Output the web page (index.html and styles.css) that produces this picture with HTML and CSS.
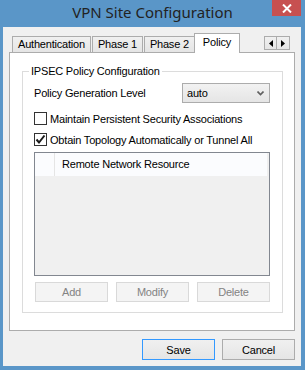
FILE: index.html
```html
<!DOCTYPE html>
<html>
<head>
    <title>VPN Site Configuration</title>
    <link rel="stylesheet" href="styles.css">
</head>
<body>
    <div class="window">
        <div class="titlebar">
            <span class="title">VPN Site Configuration</span>
            <span class="close">
                <svg width="10" height="9" viewBox="0 0 10 9">
                    <path d="M1 0.5 L9 8.5 M9 0.5 L1 8.5" stroke="#fff" stroke-width="2"/>
                </svg>
            </span>
        </div>

        <div class="client">
            <div class="tabs">
                <div class="tab">Authentication</div>
                <div class="tab">Phase 1</div>
                <div class="tab">Phase 2</div>
                <div class="tab active">Policy</div>
                <div class="tab-scroll">
                    <span class="scroll-btn">
                        <svg width="4" height="7" viewBox="0 0 4 7"><path d="M4 0 L0 3.5 L4 7 Z" fill="#000"/></svg>
                    </span>
                    <span class="scroll-btn">
                        <svg width="4" height="7" viewBox="0 0 4 7"><path d="M0 0 L4 3.5 L0 7 Z" fill="#000"/></svg>
                    </span>
                </div>
            </div>

            <div class="panel">
                <fieldset class="group">
                    <legend>IPSEC Policy Configuration</legend>

                    <div class="field-row">
                        <span>Policy Generation Level</span>
                        <div class="select">
                            <span>auto</span>
                            <svg width="7" height="5" viewBox="0 0 7 5">
                                <path d="M0.5 0.5 L3.5 3.5 L6.5 0.5" stroke="#606060" stroke-width="1.6" fill="none"/>
                            </svg>
                        </div>
                    </div>

                    <div class="check">
                        <span class="box"></span>
                        <span>Maintain Persistent Security Associations</span>
                    </div>
                    <div class="check">
                        <span class="box">
                            <svg width="11" height="11" viewBox="0 0 11 11">
                                <path d="M1.5 5.5 L4 8.5 L9.5 1.5" stroke="#1a1a1a" stroke-width="2" fill="none"/>
                            </svg>
                        </span>
                        <span>Obtain Topology Automatically or Tunnel All</span>
                    </div>

                    <div class="list">
                        <div class="list-header">
                            <span class="col-first"></span>
                            <span class="col-name">Remote Network Resource</span>
                        </div>
                    </div>

                    <div class="list-buttons">
                        <button class="btn" disabled>Add</button>
                        <button class="btn" disabled>Modify</button>
                        <button class="btn" disabled>Delete</button>
                    </div>
                </fieldset>
            </div>

            <div class="footer">
                <button class="btn default">Save</button>
                <button class="btn">Cancel</button>
            </div>
        </div>
    </div>
</body>
</html>
```

FILE: styles.css
```css
* {
    box-sizing: border-box;
}
body {
    margin: 0;
    font-family: "Liberation Sans", Arial, sans-serif;
    font-size: 11px;
    letter-spacing: -0.2px;
    color: #000;
}
.window {
    width: 305px;
    height: 370px;
    background-color: #5a96c8;
    display: flex;
    flex-direction: column;
}
.titlebar {
    position: relative;
    height: 27px;
    flex-shrink: 0;
    display: flex;
    justify-content: center;
    padding-top: 2px;
}
.title {
    font-family: "Noto Sans", sans-serif;
    font-size: 15px;
    line-height: 20px;
    letter-spacing: 0;
    color: #222;
}
.close {
    position: absolute;
    top: 0;
    right: 4px;
    width: 29px;
    height: 16px;
    background-color: #c75050;
    display: flex;
    align-items: center;
    justify-content: center;
}
.client {
    margin: 0 4px 4px 3px;
    flex: 1;
    background-color: #f0f0f0;
    padding: 6px 6px 6px 6px;
    display: flex;
    flex-direction: column;
}
.tabs {
    display: flex;
    align-items: flex-end;
    height: 19px;
    flex-shrink: 0;
    padding-left: 3px;
}
.tab {
    height: 16px;
    line-height: 15px;
    padding: 0 5px;
    border: 1px solid #acacac;
    border-bottom: none;
    background: linear-gradient(#f0f0f0, #e5e5e5);
    margin-right: 1px;
}
.tab.active {
    position: relative;
    z-index: 1;
    height: 20px;
    line-height: 17px;
    padding: 0 8px;
    margin-left: -2px;
    margin-bottom: -1px;
    background: #fff;
}
.tab-scroll {
    display: flex;
    align-self: flex-start;
    margin: 3px 5px 0 auto;
}
.scroll-btn {
    width: 13px;
    height: 14px;
    border: 1px solid #acacac;
    background: linear-gradient(#f0f0f0, #e5e5e5);
    display: flex;
    align-items: center;
    justify-content: center;
}
.scroll-btn + .scroll-btn {
    border-left: none;
}
.panel {
    height: 279px;
    flex-shrink: 0;
    border: 1px solid #acacac;
    background-color: #fff;
    padding: 12px 11px 0 12px;
}
.group {
    margin: 0;
    border: 1px solid #dcdcdc;
    padding: 0 12px 10px 11px;
}
.group legend {
    padding: 0 2px;
    margin-left: -5px;
    line-height: 13px;
}
.field-row {
    display: flex;
    justify-content: space-between;
    align-items: center;
    margin-top: 5px;
}
.select {
    width: 88px;
    height: 20px;
    border: 1px solid #acacac;
    background: linear-gradient(#f2f2f2, #e5e5e5);
    display: flex;
    align-items: center;
    justify-content: space-between;
    padding: 0 5px 0 4px;
}
.check {
    display: flex;
    align-items: center;
    gap: 3px;
    height: 13px;
    margin-top: 9px;
}
.check + .check {
    margin-top: 8px;
}
.box {
    width: 13px;
    height: 13px;
    border: 1px solid #333;
    background: #fff;
    display: flex;
}
.list {
    margin-top: 6px;
    height: 124px;
    border: 1px solid #828790;
    background-color: #f0f0f0;
    padding-right: 2px;
}
.list-header {
    display: flex;
    height: 23px;
    background-color: #fbfcfe;
}
.col-first {
    width: 20px;
    border-right: 1px solid #e5e5e5;
}
.col-name {
    padding-left: 7px;
    line-height: 23px;
}
.list-buttons {
    display: flex;
    justify-content: space-between;
    margin-top: 6px;
    padding-left: 1px;
}
.btn {
    width: 73px;
    height: 20px;
    font-family: "Liberation Sans", Arial, sans-serif;
    font-size: 11px;
    letter-spacing: -0.2px;
    color: #000;
    border: 1px solid #acacac;
    background: linear-gradient(#f0f0f0, #e5e5e5);
    padding: 0;
}
.btn:disabled {
    color: #838383;
    border-color: #d9d9d9;
    background: #f4f4f4;
}
.btn.default {
    border-color: #3399ff;
}
.footer {
    display: flex;
    justify-content: flex-end;
    gap: 7px;
    margin-top: 8px;
}
.footer .btn {
    height: 21px;
}
```
